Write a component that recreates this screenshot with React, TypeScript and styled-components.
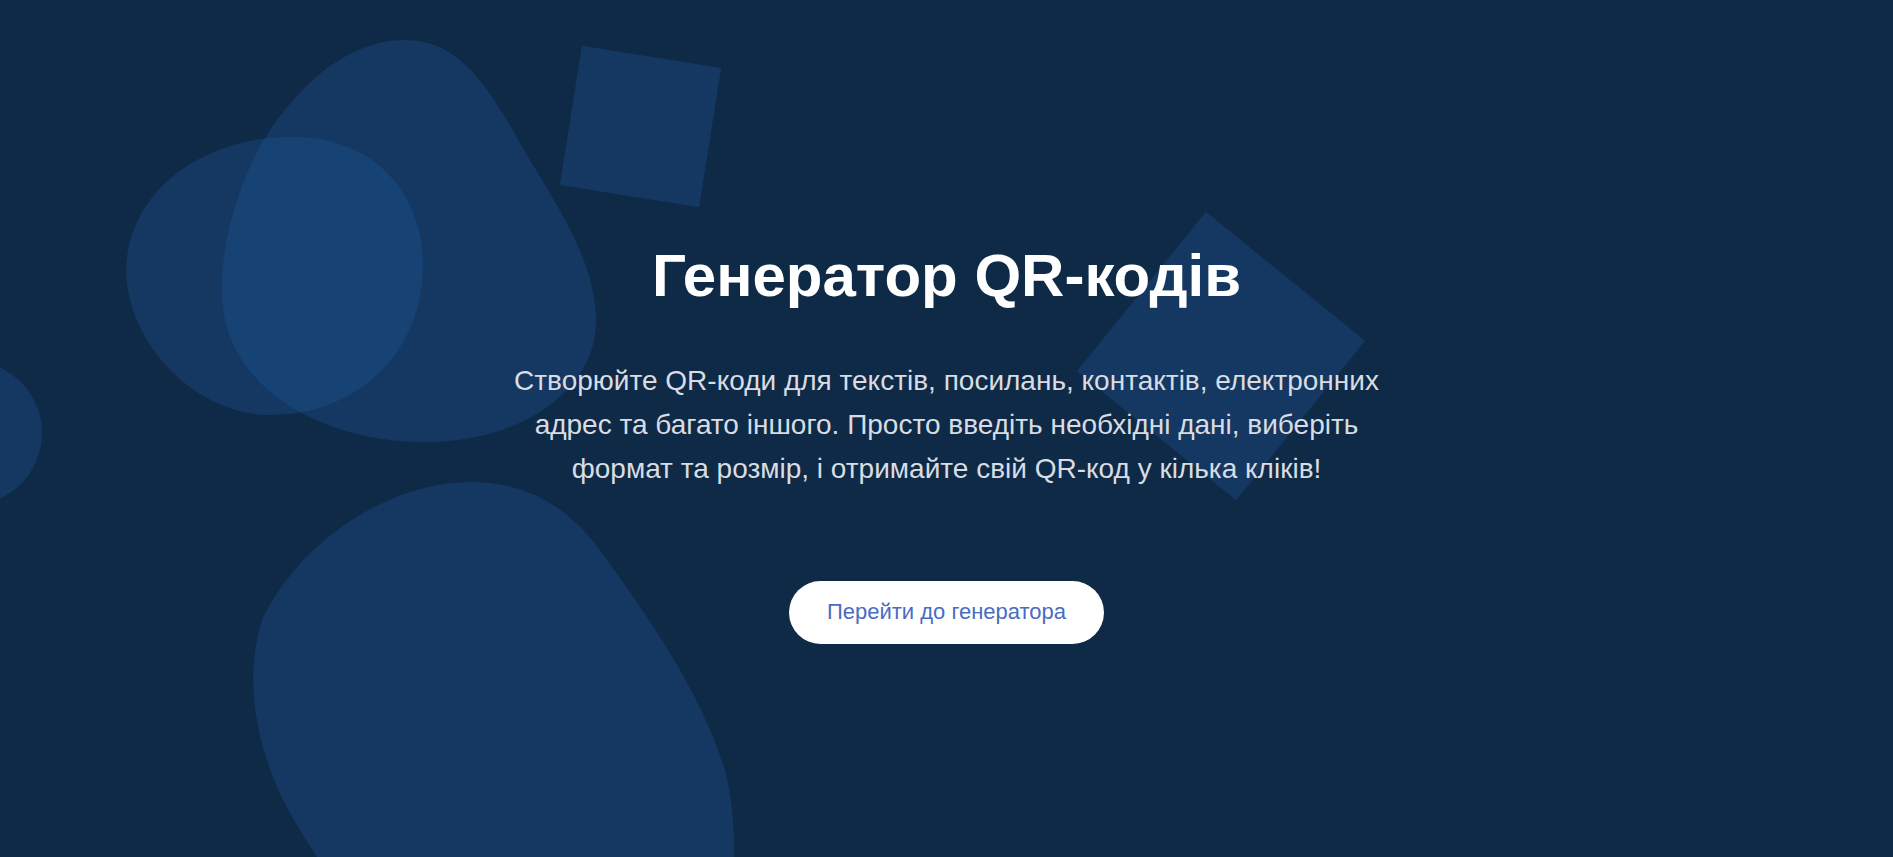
import React from "react";
import styled, { createGlobalStyle } from "styled-components";

const GlobalStyle = createGlobalStyle`
  html, body {
    margin: 0;
    padding: 0;
    background: #0f2a47;
  }
  body {
    font-family: "Liberation Sans", Arial, Helvetica, sans-serif;
  }
  * { box-sizing: border-box; }
`;

const Hero = styled.section`
  position: relative;
  width: 100%;
  height: 100vh;
  min-height: 857px;
  overflow: hidden;
  background: #0f2a47;
  display: flex;
  flex-direction: column;
  align-items: center;
  padding-top: 240px;
`;

const Backdrop = styled.svg`
  position: absolute;
  inset: 0;
  width: 100%;
  height: 100%;
  z-index: 0;
  pointer-events: none;
`;

const Content = styled.div`
  position: relative;
  z-index: 1;
  display: flex;
  flex-direction: column;
  align-items: center;
  text-align: center;
`;

const Title = styled.h1`
  margin: 0;
  font-size: 60px;
  line-height: 72px;
  font-weight: 700;
  color: #ffffff;
`;

const Lead = styled.p`
  margin: 46.5px 0 0;
  max-width: 900px;
  font-size: 28px;
  line-height: 44.4px;
  color: #d8dce3;
`;

const CtaButton = styled.a`
  margin-top: 89px;
  display: inline-flex;
  align-items: center;
  justify-content: center;
  height: 63px;
  padding: 0 38px;
  border-radius: 32px;
  background: #ffffff;
  color: #4a6cc0;
  font-size: 22px;
  text-decoration: none;
  cursor: pointer;
`;

const SHAPE = "rgba(35, 97, 174, 0.26)";

const blobPear =
  "M405,40 C345,40 292,90 258,150 C230,205 215,270 225,320 C240,390 320,440 420,442 C520,444 600,390 596,315 C593,260 560,210 530,160 C492,95 465,40 405,40 Z";

const blobRound =
  "M126,273 C126,200 190,140 287,137 C370,134 423,190 423,265 C423,350 360,415 270,415 C200,415 130,350 126,273 Z";

const blobBottom =
  "M471,482 C390,482 300,540 262,620 C240,690 262,770 300,830 C330,880 360,920 400,960 L720,960 C735,900 740,830 725,770 C700,690 650,620 600,550 C570,510 530,482 471,482 Z";

export default function App() {
  return (
    <>
      <GlobalStyle />
      <Hero>
        <Backdrop viewBox="0 0 1893 857" preserveAspectRatio="xMinYMin slice" aria-hidden="true">
          <path d={blobPear} fill={SHAPE} />
          <path d={blobRound} fill={SHAPE} />
          <path d={blobBottom} fill={SHAPE} />
          <circle cx={-30} cy={433} r={72} fill={SHAPE} />
          <rect x={-70.5} y={-70.5} width={141} height={141} fill={SHAPE} transform="translate(640.5 126.5) rotate(9)" />
          <rect x={-102.5} y={-102.5} width={205} height={205} fill={SHAPE} transform="translate(1221 356) rotate(39)" />
        </Backdrop>
        <Content>
          <Title>Генератор QR-кодів</Title>
          <Lead>
            Створюйте QR-коди для текстів, посилань, контактів, електронних адрес та багато іншого. Просто введіть необхідні дані, виберіть формат та розмір, і отримайте свій QR-код у кілька кліків!
          </Lead>
          <CtaButton href="#generator">Перейти до генератора</CtaButton>
        </Content>
      </Hero>
    </>
  );
}
